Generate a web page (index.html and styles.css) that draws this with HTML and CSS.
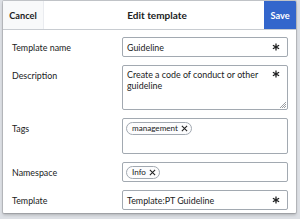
FILE: index.html
```html
<!DOCTYPE html>
<html>
<head>
<meta charset="utf-8">
<link rel="stylesheet" href="styles.css">
</head>
<body>
<div class="stage">
  <div class="dialog">
    <div class="head">
      <div class="btn cancel">Cancel</div>
      <div class="title">Edit template</div>
      <div class="btn save">Save</div>
    </div>
    <div class="form">
      <div class="label">Template name</div>
      <div class="field input"><span class="val">Guideline</span><svg class="req" viewBox="0 0 10 10"><path d="M5 0.5V9.5M1.1 2.75L8.9 7.25M1.1 7.25L8.9 2.75" /></svg></div>

      <div class="label">Description</div>
      <div class="field area"><span class="val">Create a code of conduct or other guideline</span><svg class="req" viewBox="0 0 10 10"><path d="M5 0.5V9.5M1.1 2.75L8.9 7.25M1.1 7.25L8.9 2.75" /></svg><svg class="grip" viewBox="0 0 6 6"><path d="M6 0L0 6M6 2L2 6M6 4L4 6" /></svg></div>

      <div class="label">Tags</div>
      <div class="field tags"><span class="pill">management<svg viewBox="0 0 8 8"><path d="M1 1L7 7M7 1L1 7" /></svg></span></div>

      <div class="label">Namespace</div>
      <div class="field input small"><span class="pill">Info<svg viewBox="0 0 8 8"><path d="M1 1L7 7M7 1L1 7" /></svg></span></div>

      <div class="label">Template</div>
      <div class="field input"><span class="val">Template:PT Guideline</span><svg class="req" viewBox="0 0 10 10"><path d="M5 0.5V9.5M1.1 2.75L8.9 7.25M1.1 7.25L8.9 2.75" /></svg></div>
    </div>
  </div>
</div>
</body>
</html>
```
FILE: styles.css
```css
html, body {
  margin: 0;
  padding: 0;
}
body {
  width: 300px;
  height: 219px;
  overflow: hidden;
  background: #dcdfe4;
  font-family: Lato, "Open Sans", "Liberation Sans", sans-serif;
  color: #202122;
}
.stage {
  padding: 1px 4px 0 3px;
}
.dialog {
  height: 212px;
  background: #fff;
  box-shadow: 0 0 0 1px rgba(0,0,0,0.12), 0 2px 3px rgba(0,0,0,0.2);
  border-radius: 1px;
  overflow: hidden;
}
.head {
  display: flex;
  height: 28px;
  border-bottom: 1px solid #c8ccd1;
  font-weight: bold;
  font-size: 9.2px;
}
.btn {
  display: flex;
  align-items: center;
  justify-content: center;
}
.cancel {
  width: 40px;
  background: #f8f9fa;
  border-right: 1px solid #eaecf0;
  color: #202122;
}
.title {
  flex: 1;
  display: flex;
  align-items: center;
  justify-content: center;
  font-size: 10px;
  padding-left: 6px;
}
.save {
  width: 32px;
  background: #3366cc;
  color: #fff;
}
.form {
  display: grid;
  grid-template-columns: 110px 166px;
  row-gap: 8px;
  padding: 7px 0 0 9px;
  font-size: 8.9px;
}
.label {
  padding-top: 5px;
  line-height: 11px;
}
.field {
  position: relative;
  box-sizing: border-box;
  border: 1px solid #a2a9b1;
  border-radius: 2px;
  background: #fff;
}
.input {
  height: 20px;
  display: flex;
  align-items: center;
  padding-left: 4px;
}
.input.small {
  height: 20px;
  padding-left: 3px;
}
.val {
  line-height: 11px;
}
.area {
  height: 45px;
  padding: 3px 18px 0 4px;
  line-height: 11px;
}
.tags {
  height: 36px;
  padding: 3px 0 0 3px;
}
.req {
  position: absolute;
  right: 7px;
  top: 5px;
  width: 8px;
  height: 8px;
  fill: none;
  stroke: #202122;
  stroke-width: 1.6;
}
.area .req {
  top: 4px;
}
.grip {
  position: absolute;
  right: 1px;
  bottom: 1px;
  width: 6px;
  height: 6px;
  fill: none;
  stroke: #72777d;
  stroke-width: 0.7;
}
.pill {
  display: inline-flex;
  align-items: center;
  box-sizing: border-box;
  height: 13px;
  padding: 0 3px 0 5px;
  border: 1px solid #a2a9b1;
  border-radius: 7px;
  background: #fcfcfd;
  font-size: 8.1px;
  line-height: 11px;
}
.pill svg {
  width: 7px;
  height: 7px;
  margin-left: 3px;
  fill: none;
  stroke: #202122;
  stroke-width: 1.2;
}
```
